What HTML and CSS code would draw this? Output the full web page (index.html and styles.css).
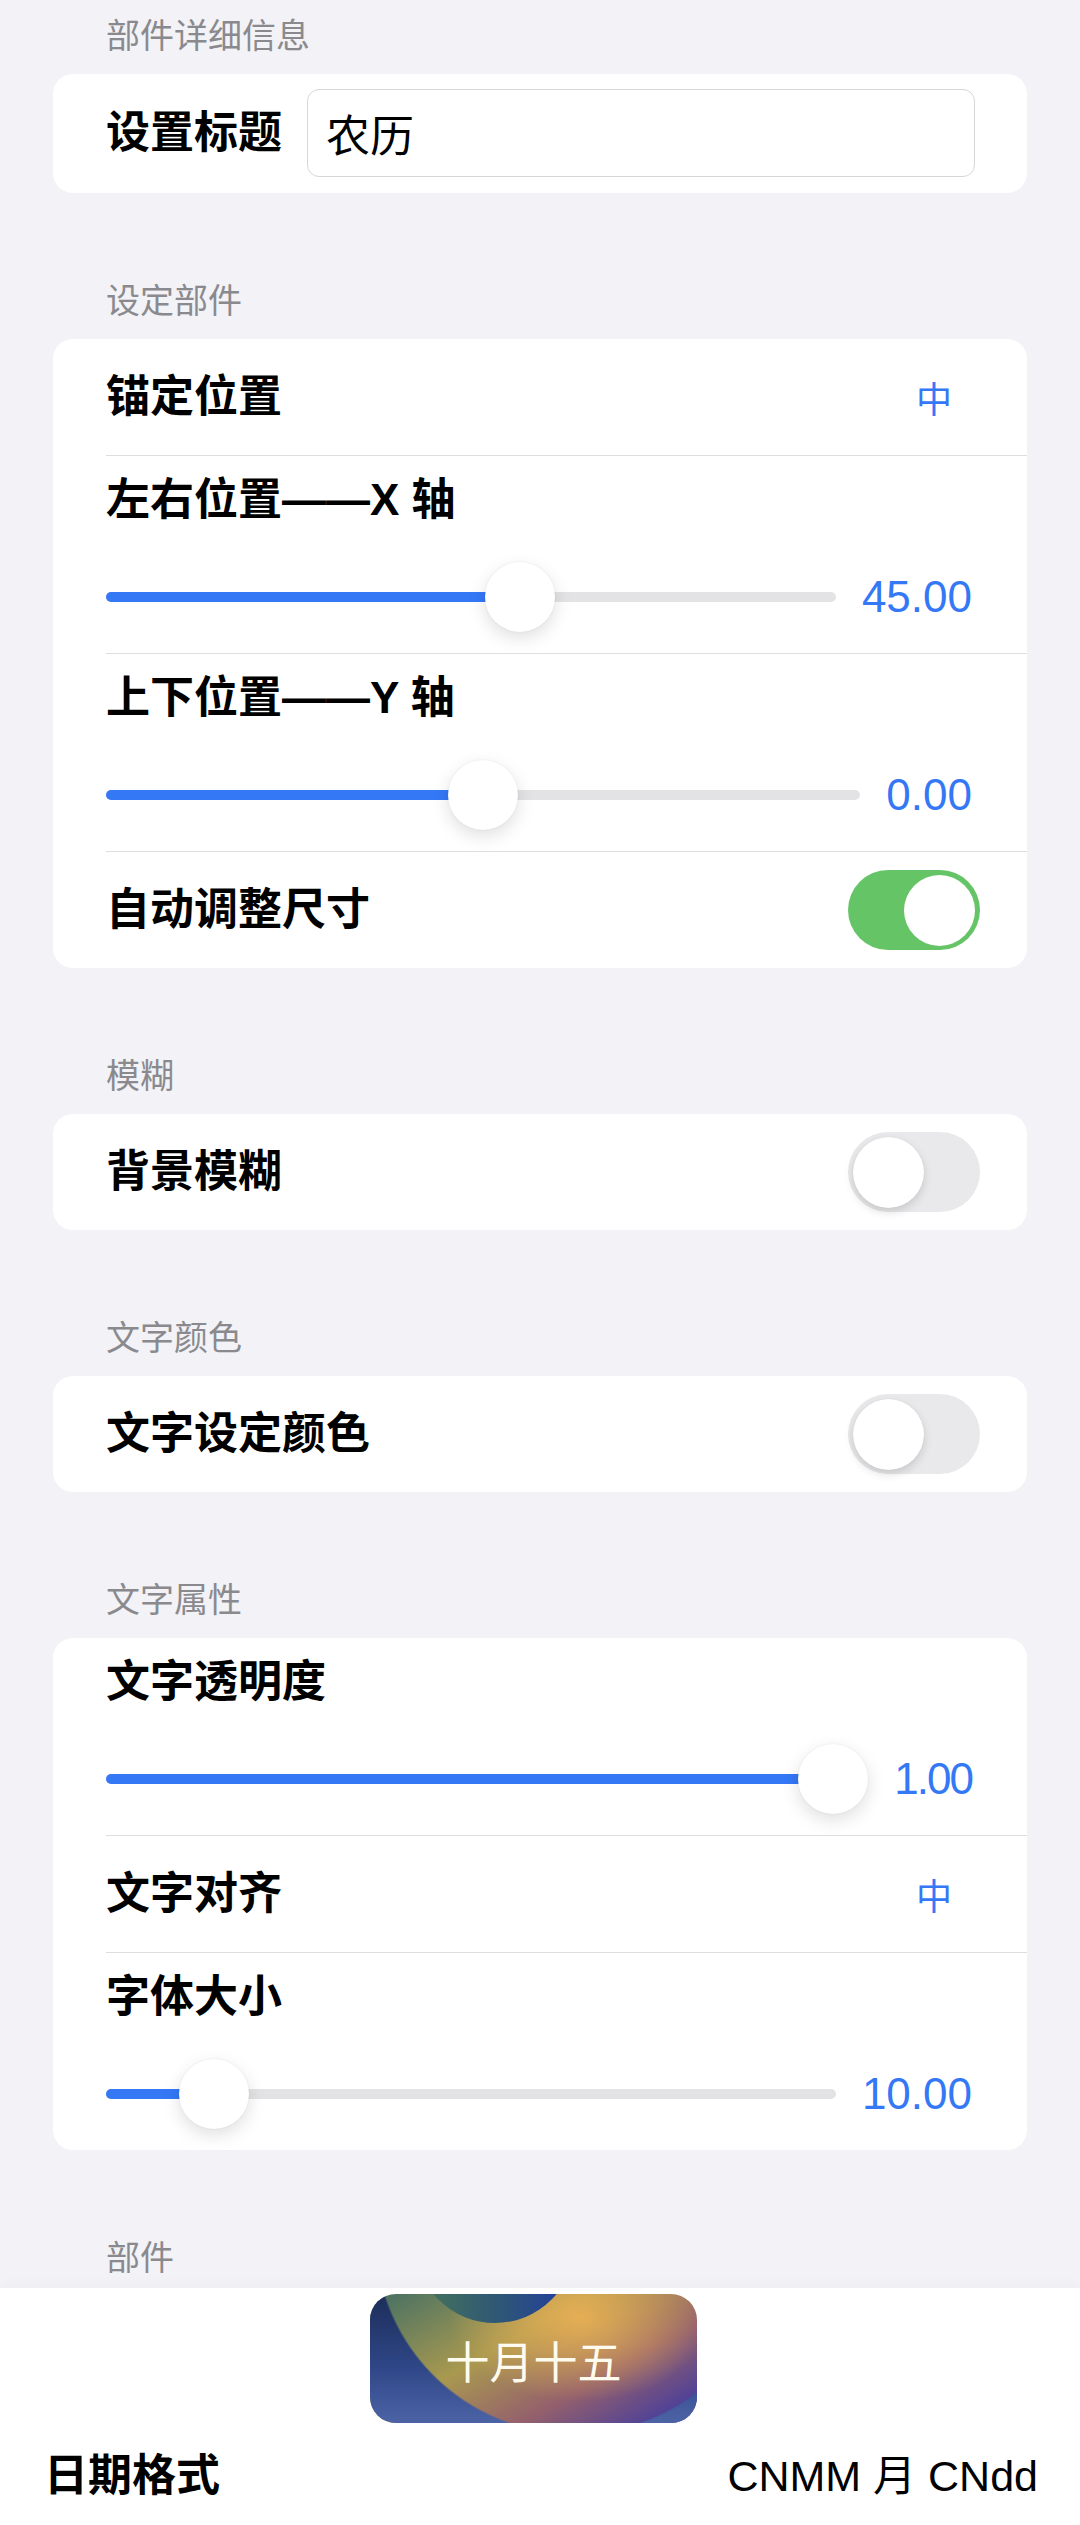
FILE: index.html
```html
<!DOCTYPE html>
<html lang="zh-CN">
<head>
    <meta charset="UTF-8">
    <meta name="viewport" content="width=device-width, initial-scale=1.0">
    <title>部件详细信息</title>
    <link rel="stylesheet" href="styles.css">
</head>
<body>

    <div class="settings">
        <h2 class="section-title">部件详细信息</h2>
        <div class="card">
            <div class="row title-row">
                <span class="label">设置标题</span>
                <input class="text-input" type="text" value="农历">
            </div>
        </div>

        <h2 class="section-title">设定部件</h2>
        <div class="card">
            <div class="row">
                <span class="label">锚定位置</span>
                <span class="picker">中</span>
            </div>
            <div class="row slider-row">
                <span class="label">左右位置——X 轴</span>
                <div class="slider-line">
                    <div class="slider" style="--p: 0.575">
                        <div class="track"><div class="fill"></div></div>
                        <div class="thumb"></div>
                    </div>
                    <span class="value">45.00</span>
                </div>
            </div>
            <div class="row slider-row">
                <span class="label">上下位置——Y 轴</span>
                <div class="slider-line">
                    <div class="slider" style="--p: 0.5">
                        <div class="track"><div class="fill"></div></div>
                        <div class="thumb"></div>
                    </div>
                    <span class="value">0.00</span>
                </div>
            </div>
            <div class="row">
                <span class="label">自动调整尺寸</span>
                <div class="switch on"><div class="knob"></div></div>
            </div>
        </div>

        <h2 class="section-title">模糊</h2>
        <div class="card">
            <div class="row">
                <span class="label">背景模糊</span>
                <div class="switch"><div class="knob"></div></div>
            </div>
        </div>

        <h2 class="section-title">文字颜色</h2>
        <div class="card">
            <div class="row">
                <span class="label">文字设定颜色</span>
                <div class="switch"><div class="knob"></div></div>
            </div>
        </div>

        <h2 class="section-title">文字属性</h2>
        <div class="card">
            <div class="row slider-row">
                <span class="label">文字透明度</span>
                <div class="slider-line">
                    <div class="slider" style="--p: 1">
                        <div class="track"><div class="fill"></div></div>
                        <div class="thumb"></div>
                    </div>
                    <span class="value narrow">1.00</span>
                </div>
            </div>
            <div class="row">
                <span class="label">文字对齐</span>
                <span class="picker">中</span>
            </div>
            <div class="row slider-row">
                <span class="label">字体大小</span>
                <div class="slider-line">
                    <div class="slider" style="--p: 0.111">
                        <div class="track"><div class="fill"></div></div>
                        <div class="thumb"></div>
                    </div>
                    <span class="value">10.00</span>
                </div>
            </div>
        </div>

        <h2 class="section-title last">部件</h2>
    </div>

    <div class="preview-panel">
        <div class="widget">
            <span class="widget-text">十月十五</span>
        </div>
        <div class="date-row">
            <span class="label">日期格式</span>
            <span class="date-format">CNMM 月 CNdd</span>
        </div>
    </div>

</body>
</html>
```

FILE: styles.css
```css
/* Base */
body {
    margin: 0;
    background-color: #f2f2f7;
    font-family: "Liberation Sans", "Noto Sans CJK SC", sans-serif;
    color: #000;
}
.settings {
    padding: 16px 53px 0;
}

/* Section headers */
.section-title {
    margin: 88px 0 18px 53px;
    font-size: 34px;
    line-height: 40px;
    font-weight: 400;
    color: #8a8a8e;
}
.section-title:first-child {
    margin-top: 0;
}
.section-title.last {
    margin-bottom: 0;
}

/* Cards and rows */
.card {
    background: #ffffff;
    border-radius: 20px;
    overflow: hidden;
}
.row {
    display: flex;
    align-items: center;
    justify-content: space-between;
    min-height: 116px;
    margin-left: 53px;
    padding-right: 55px;
}
.row + .row {
    border-top: 1px solid #dedee2;
}
.label {
    font-size: 44px;
    line-height: 52px;
    font-weight: 700;
    white-space: nowrap;
}
.picker {
    font-size: 36px;
    color: #3478f6;
    margin-right: 20px;
}

/* Title input */
.title-row {
    min-height: 0;
    padding-top: 15px;
    padding-bottom: 16px;
    padding-right: 52px;
    gap: 25px;
}
.text-input {
    flex: 1;
    min-width: 0;
    height: 88px;
    box-sizing: border-box;
    border: 1px solid #d6d6d9;
    border-radius: 12px;
    padding: 0 18px;
    font-family: "Liberation Sans", "Noto Sans CJK SC", sans-serif;
    font-size: 44px;
    color: #000;
    background: #fff;
    outline: none;
}

/* Sliders */
.slider-row {
    flex-direction: column;
    align-items: stretch;
    padding-top: 18px;
    padding-bottom: 21px;
}
.slider-line {
    display: flex;
    align-items: center;
    gap: 26px;
    margin-top: 36px;
    height: 70px;
}
.slider {
    position: relative;
    flex: 1;
    height: 70px;
}
.track {
    margin-top: 30px;
    height: 10px;
    border-radius: 5px;
    background: #e3e3e6;
    overflow: hidden;
}
.fill {
    height: 100%;
    width: calc(var(--p) * (100% - 70px) + 35px);
    background: #3478f6;
}
.thumb {
    position: absolute;
    top: 0;
    left: calc(var(--p) * (100% - 70px));
    width: 70px;
    height: 70px;
    border-radius: 50%;
    background: #ffffff;
    box-shadow: 0 6px 18px rgba(0, 0, 0, 0.13), 0 0 2px rgba(0, 0, 0, 0.08);
}
.value {
    font-size: 44px;
    line-height: 52px;
    color: #3478f6;
}
.value.narrow {
    letter-spacing: -2px;
}

/* Switches */
.switch {
    display: flex;
    align-items: center;
    box-sizing: border-box;
    width: 132px;
    height: 80px;
    padding: 0 5px;
    margin-right: -8px;
    border-radius: 40px;
    background: #e9e9eb;
}
.switch.on {
    justify-content: flex-end;
    background: #65c466;
}
.knob {
    width: 71px;
    height: 71px;
    border-radius: 50%;
    background: #ffffff;
    box-shadow: 0 4px 10px rgba(0, 0, 0, 0.14), 0 0 1px rgba(0, 0, 0, 0.1);
}
.switch.on .knob {
    box-shadow: none;
}

/* Preview panel */
.preview-panel {
    margin-top: 10px;
    padding: 6px 42px 24px 44px;
    background: #ffffff;
    box-shadow: 0 -6px 12px rgba(0, 0, 0, 0.02);
}
.widget {
    position: relative;
    overflow: hidden;
    display: flex;
    align-items: center;
    justify-content: center;
    width: 327px;
    height: 129px;
    margin-left: 326px;
    border-radius: 26px;
    background:
        radial-gradient(ellipse 130px 85px at 64% 18%, rgba(232, 176, 84, 0.95), rgba(232, 176, 84, 0) 100%),
        linear-gradient(150deg, #4f7462 5%, #a9994f 40%, #94606c 68%, #3636a8 100%);
}
.widget::before {
    content: "";
    position: absolute;
    inset: 0;
    background: linear-gradient(to bottom, #1c2d58 0%, #2e4686 55%, #4c64a6 100%);
    -webkit-mask-image: radial-gradient(circle 200px at 205px -60px, transparent 199px, #000 201px);
    mask-image: radial-gradient(circle 200px at 205px -60px, transparent 199px, #000 201px);
}
.widget::after {
    content: "";
    position: absolute;
    left: 45px;
    top: -131px;
    width: 160px;
    height: 160px;
    border-radius: 50%;
    background: linear-gradient(to right, #43705e 10%, #2d5677 55%, #24409a 90%);
}
.widget-text {
    position: relative;
    z-index: 1;
    padding-top: 10px;
    font-size: 44px;
    line-height: 52px;
    color: #fffbef;
}
.date-row {
    display: flex;
    align-items: center;
    justify-content: space-between;
    margin-top: 27px;
}
.date-format {
    font-size: 43px;
    line-height: 52px;
}
```
